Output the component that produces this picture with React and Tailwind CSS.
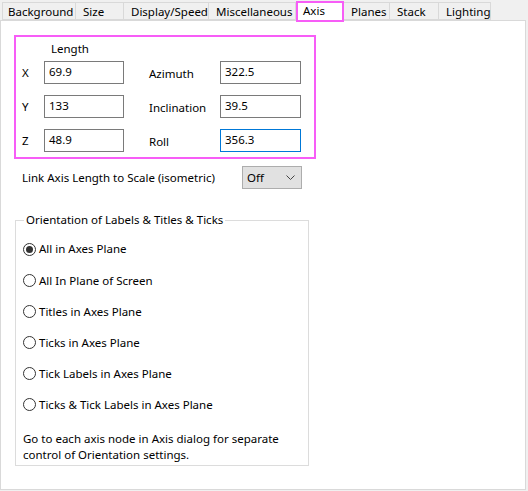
import React from "react";

const TABS = [
  { label: "Background", w: 74 },
  { label: "Size", w: 48 },
  { label: "Display/Speed", w: 85 },
  { label: "Miscellaneous", w: 87 },
  { label: "Axis", w: 48, active: true },
  { label: "Planes", w: 46 },
  { label: "Stack", w: 49 },
  { label: "Lighting", w: 52 },
];

const AXES = [
  { axis: "X", len: "69.9", angle: "Azimuth", val: "322.5" },
  { axis: "Y", len: "133", angle: "Inclination", val: "39.5" },
  { axis: "Z", len: "48.9", angle: "Roll", val: "356.3", focus: true },
];

const ORIENT = [
  "All in Axes Plane",
  "All In Plane of Screen",
  "Titles in Axes Plane",
  "Ticks in Axes Plane",
  "Tick Labels in Axes Plane",
  "Ticks & Tick Labels in Axes Plane",
];

function Field({ value, focus, wide }) {
  return (
    <div
      className={`h-[23px] border pl-[4px] pt-[1px] leading-[18px] bg-white ${
        wide ? "w-[81px]" : "w-[80px]"
      } ${focus ? "border-[#0078d7]" : "border-[#7a7a7a]"}`}
    >
      {value}
    </div>
  );
}

function Radio({ label, checked }) {
  return (
    <div className="flex items-center h-[18px]">
      <span className="w-[13px] h-[13px] rounded-full border border-[#333] bg-white flex items-center justify-center mr-[3px]">
        {checked && <span className="w-[7px] h-[7px] rounded-full bg-[#333]" />}
      </span>
      <span>{label}</span>
    </div>
  );
}

export default function App() {
  return (
    <div
      className="w-[528px] h-[491px] bg-[#f0f0f0] text-[11.5px] text-black overflow-hidden"
      style={{ fontFamily: '"Segoe UI", "Noto Sans", sans-serif' }}
    >
      {/* tab strip */}
      <div className="flex pl-[2px] pt-[2px] h-[20px] relative z-10 whitespace-nowrap">
        {TABS.map((t) =>
          t.active ? (
            <div
              key={t.label}
              style={{ width: t.w }}
              className="h-[21px] -mt-[1px] border-2 border-[#f75df7] bg-white pl-[5px] leading-[15px]"
            >
              {t.label}
            </div>
          ) : (
            <div
              key={t.label}
              style={{ width: t.w }}
              className="h-[18px] border-y border-r first:border-l border-[#d9d9d9] pl-[7px] first:pl-[5px] leading-[17px] bg-[#f0f0f0]"
            >
              {t.label}
            </div>
          )
        )}
      </div>

      {/* page */}
      <div className="w-[526px] h-[470px] border border-[#d9d9d9] bg-white pl-[13px] pt-[14px]">
        <div className="w-[302px] h-[124px] border-2 border-[#f75df7] pl-[6px]">
          <div className="pl-[29px] pt-[4px] h-[24px] leading-[16px]">Length</div>
          <div className="flex flex-col gap-[11px]">
            {AXES.map((r) => (
              <div key={r.axis} className="flex items-center">
                <span className="w-[22px]">{r.axis}</span>
                <Field value={r.len} />
                <span className="w-[71px] pl-[25px] mt-[3px] box-content">{r.angle}</span>
                <Field value={r.val} focus={r.focus} wide />
              </div>
            ))}
          </div>
        </div>

        <div className="flex items-center mt-[7px] pl-[8px]">
          <span className="w-[220px]">Link Axis Length to Scale (isometric)</span>
          <div className="w-[60px] h-[23px] border border-[#adadad] bg-[#e1e1e1] flex items-center justify-between pl-[4px] pr-[6px]">
            <span>Off</span>
            <svg width="9" height="5" viewBox="0 0 9 5" fill="none">
              <path d="M0.5 0.5 L4.5 4.5 L8.5 0.5" stroke="#444" strokeWidth="1" />
            </svg>
          </div>
        </div>

        <div className="relative mt-[31px] ml-[1px] w-[294px] h-[246px] border border-[#dcdcdc] pl-[7px] pt-[19px]">
          <span className="absolute -top-[9px] left-[8px] bg-white px-[2px] leading-[16px]">
            Orientation of Labels &amp; Titles &amp; Ticks
          </span>
          <div className="flex flex-col gap-[13.2px]">
            {ORIENT.map((o, i) => (
              <Radio key={o} label={o} checked={i === 0} />
            ))}
          </div>
          <p className="mt-[17px] leading-[16px]">
            Go to each axis node in Axis dialog for separate
            <br />
            control of Orientation settings.
          </p>
        </div>
      </div>
    </div>
  );
}
